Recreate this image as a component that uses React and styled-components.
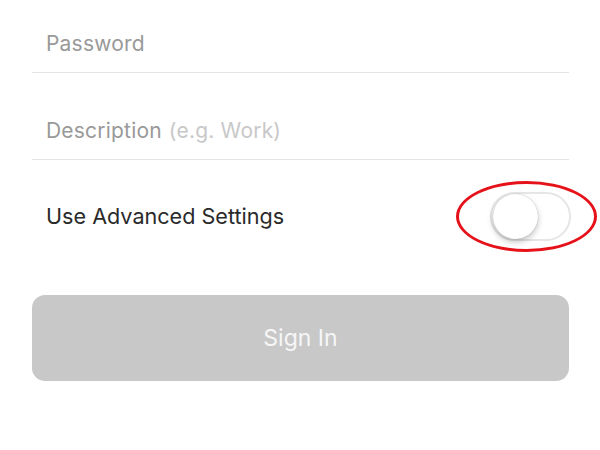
import React from "react";
import styled, { createGlobalStyle } from "styled-components";

const GlobalStyle = createGlobalStyle`
  body {
    margin: 0;
    background: #ffffff;
    font-family: Inter, "Liberation Sans", sans-serif;
    overflow: hidden;
  }
`;

const Page = styled.div`
  width: 600px;
  height: 450px;
  overflow: hidden;
  background: #ffffff;
`;

const Form = styled.div`
  display: flex;
  flex-direction: column;
  margin-top: -14px;
  padding: 0 31px 0 32px;
`;

const Field = styled.div`
  display: flex;
  align-items: flex-end;
  height: 87px;
  padding: 0 0 14px 14px;
  box-sizing: border-box;
  border-bottom: 1px solid #e3e3e3;
  font-size: 21px;
  letter-spacing: 0.2px;
  line-height: 28px;
  color: #999999;
`;

const Hint = styled.span`
  margin-left: 7px;
  color: #c8c8c8;
`;

const SwitchRow = styled.div`
  display: flex;
  align-items: center;
  justify-content: space-between;
  height: 112px;
  padding: 0 0 0 14px;
`;

const Label = styled.span`
  font-size: 21.6px;
  color: #2a2a2a;
`;

const SwitchWrap = styled.div`
  position: relative;
  margin-right: -2px;
`;

const Track = styled.div`
  width: 81px;
  height: 49px;
  box-sizing: border-box;
  border-radius: 25px;
  border: 2px solid #e6e6e6;
  background: #ffffff;
  display: flex;
  align-items: center;
  padding: 0 1px;
`;

const Knob = styled.div`
  width: 45px;
  height: 45px;
  border-radius: 50%;
  background: #ffffff;
  box-shadow: 0 3px 6px rgba(0, 0, 0, 0.24), 0 0 1px rgba(0, 0, 0, 0.3);
`;

const Ellipse = styled.div`
  position: absolute;
  left: -34px;
  top: -11px;
  width: 141px;
  height: 71px;
  box-sizing: border-box;
  border: 3.5px solid #e5121a;
  border-radius: 50%;
  pointer-events: none;
`;

const SignIn = styled.button`
  height: 86px;
  margin-top: 23px;
  border: none;
  border-radius: 13px;
  background: #c8c8c8;
  color: #f6f6f6;
  font-family: Inter, "Liberation Sans", sans-serif;
  font-size: 23px;
  cursor: default;
`;

export default function App() {
  return (
    <Page>
      <GlobalStyle />
      <Form>
        <Field>Password</Field>
        <Field>
          Description<Hint>(e.g. Work)</Hint>
        </Field>
        <SwitchRow>
          <Label>Use Advanced Settings</Label>
          <SwitchWrap>
            <Track>
              <Knob />
            </Track>
            <Ellipse />
          </SwitchWrap>
        </SwitchRow>
        <SignIn>Sign In</SignIn>
      </Form>
    </Page>
  );
}
